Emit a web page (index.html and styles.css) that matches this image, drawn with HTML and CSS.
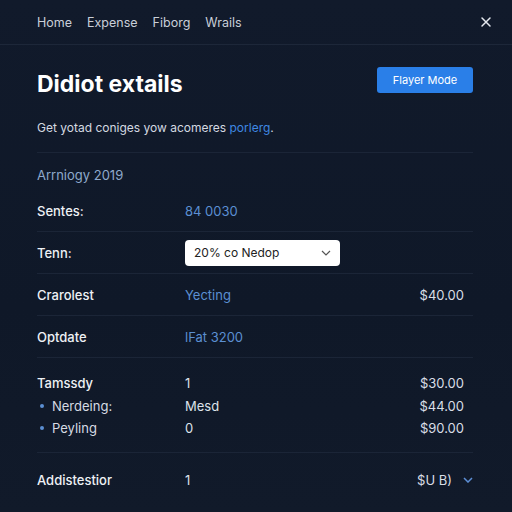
FILE: index.html
```html
<!DOCTYPE html>
<html>
<head>
<meta charset="utf-8">
<link rel="stylesheet" href="styles.css">
</head>
<body>
<nav class="nav">
  <div class="nav-links">
    <span>Home</span>
    <span>Expense</span>
    <span>Fiborg</span>
    <span>Wrails</span>
  </div>
  <svg class="close" width="12" height="12" viewBox="0 0 12 12"><path d="M2 2L10 10M10 2L2 10" stroke="#e6eaf0" stroke-width="1.5" stroke-linecap="round"/></svg>
</nav>
<main class="main">
  <header class="head">
    <h1 class="title">Didiot extails</h1>
    <button class="btn">Flayer Mode</button>
  </header>
  <p class="sub">Get yotad coniges yow acomeres <span class="link">porlerg</span>.</p>
  <div class="section">Arrniogy 2019</div>
  <div class="row">
    <span class="label">Sentes:</span>
    <span class="val blue">84 0030</span>
    <span class="amt"></span>
  </div>
  <div class="row">
    <span class="label">Tenn:</span>
    <span class="select">20% co Nedop
      <svg width="10" height="6" viewBox="0 0 10 6"><path d="M1 1L5 5L9 1" fill="none" stroke="#555" stroke-width="1.2"/></svg>
    </span>
    <span class="amt"></span>
  </div>
  <div class="row">
    <span class="label">Crarolest</span>
    <span class="val blue">Yecting</span>
    <span class="amt">$40.00</span>
  </div>
  <div class="row">
    <span class="label">Optdate</span>
    <span class="val blue">lFat 3200</span>
    <span class="amt"></span>
  </div>
  <div class="group">
    <div class="gline">
      <span class="label">Tamssdy</span>
      <span class="val">1</span>
      <span class="amt">$30.00</span>
    </div>
    <div class="gline">
      <span class="label sublabel"><i class="dot"></i>Nerdeing:</span>
      <span class="val">Mesd</span>
      <span class="amt">$44.00</span>
    </div>
    <div class="gline">
      <span class="label sublabel"><i class="dot"></i>Peyling</span>
      <span class="val">0</span>
      <span class="amt">$90.00</span>
    </div>
  </div>
  <div class="row last">
    <span class="label">Addistestior</span>
    <span class="val">1</span>
    <span class="amt amt-chev">$U B)
      <svg width="10" height="6" viewBox="0 0 10 6"><path d="M1 1L5 5L9 1" fill="none" stroke="#5d8fd6" stroke-width="1.5"/></svg>
    </span>
  </div>
</main>
</body>
</html>
```
FILE: styles.css
```css
html, body {
  margin: 0;
  padding: 0;
}
body {
  width: 512px;
  height: 512px;
  overflow: hidden;
  background: linear-gradient(180deg, #111a2b 0%, #0f1828 60%, #111a2a 100%);
  font-family: Inter, "Liberation Sans", sans-serif;
  color: #e6eaf0;
}
.nav {
  height: 44px;
  border-bottom: 1px solid #1d2739;
  display: flex;
  align-items: center;
  justify-content: space-between;
  padding: 0 20px 0 37px;
}
.nav-links {
  display: flex;
  gap: 15px;
  font-size: 12.5px;
  color: #c9cfd9;
}
.close {
  display: block;
}
.main {
  padding: 0 39px 0 37px;
}
.head {
  display: flex;
  justify-content: space-between;
  align-items: flex-start;
  margin-top: 22px;
}
.title {
  margin: 4px 0 0;
  font-size: 23px;
  font-weight: 700;
  line-height: 26px;
  color: #ffffff;
}
.btn {
  width: 96px;
  height: 26px;
  border: none;
  border-radius: 3px;
  background: #2a7fe8;
  color: #ffffff;
  font-family: inherit;
  font-size: 11px;
  padding: 0;
}
.sub {
  margin: 23px 0 0;
  font-size: 12px;
  line-height: 16px;
  color: #d4d9e1;
  padding-bottom: 16px;
  border-bottom: 1px solid #1b2537;
}
.link {
  color: #3f88e2;
}
.section {
  margin-top: 13px;
  font-size: 13px;
  line-height: 18px;
  color: #8ea9cc;
  margin-bottom: 6px;
}
.row {
  display: grid;
  grid-template-columns: 148px 1fr auto;
  align-items: center;
  height: 41px;
  border-bottom: 1px solid #1b2537;
  font-size: 13px;
}
.row.last {
  border-bottom: none;
  height: 54px;
}
.label {
  color: #eef1f5;
  font-weight: 500;
}
.val {
  color: #dde2ea;
}
.val.blue {
  color: #5b8fd2;
}
.amt {
  color: #d9dee6;
  padding-right: 9px;
}
.amt-chev {
  display: flex;
  align-items: center;
  gap: 11px;
  padding-right: 0;
}
.select {
  width: 155px;
  height: 26px;
  box-sizing: border-box;
  background: #ffffff;
  border-radius: 4px;
  color: #222;
  display: flex;
  align-items: center;
  justify-content: space-between;
  padding: 0 9px 0 9px;
  font-size: 12px;
}
.group {
  padding: 14px 0 12px;
  border-bottom: 1px solid #1b2537;
}
.gline {
  display: grid;
  grid-template-columns: 148px 1fr auto;
  align-items: center;
  height: 22.5px;
  font-size: 13px;
}
.sublabel {
  display: flex;
  align-items: center;
  color: #d6dbe3;
  font-weight: 400;
}
.dot {
  width: 4px;
  height: 4px;
  border-radius: 50%;
  background: #5b8fd2;
  margin: 0 8px 0 3px;
}
```
